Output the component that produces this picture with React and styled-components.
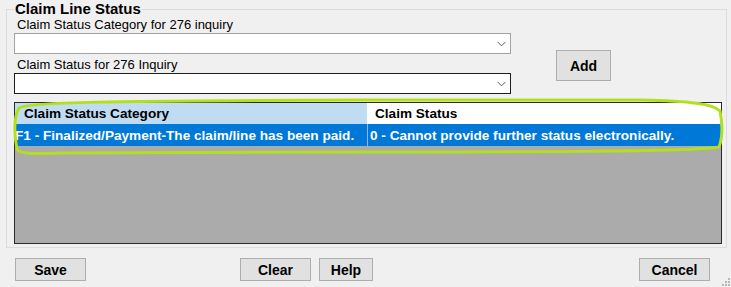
import React from "react";
import styled, { createGlobalStyle } from "styled-components";

const GlobalStyle = createGlobalStyle`
  body {
    margin: 0;
    background: #f0f0f0;
    font-family: "Liberation Sans", Arial, sans-serif;
    font-size: 13px;
    color: #000;
  }
`;

const Page = styled.div`
  width: 731px;
  height: 287px;
  box-sizing: border-box;
  padding: 0 4px 0 6px;
  background: #f0f0f0;
  position: relative;
  overflow: hidden;
`;

const Group = styled.fieldset`
  margin: 1px 0 0 0;
  padding: 0 4px 3px 7px;
  border: 1px solid #dcdcdc;
  min-inline-size: 0;
`;

const Legend = styled.legend`
  padding: 0 1px;
  font-weight: bold;
  font-size: 15px;
  line-height: 16px;
`;

const TopRow = styled.div`
  display: flex;
  align-items: flex-start;
`;

const Fields = styled.div`
  display: flex;
  flex-direction: column;
  width: 497px;
`;

const Label = styled.div`
  line-height: 16px;
  height: 16px;
  padding-left: 3px;
  margin-top: ${(p) => p.$top || 0}px;
`;

const Combo = styled.div`
  height: 21px;
  box-sizing: border-box;
  background: #fff;
  border: 1px solid ${(p) => (p.$focused ? "#1e1e1e" : "#a3a3a3")};
  display: flex;
  align-items: center;
  justify-content: flex-end;
  padding-right: 4px;
`;

const Button = styled.button`
  box-sizing: border-box;
  width: ${(p) => p.$w}px;
  height: ${(p) => p.$h || 23}px;
  margin-left: ${(p) => p.$ml || 0}px;
  margin-top: ${(p) => p.$mt || 0}px;
  background: #e1e1e1;
  border: 1px solid #adadad;
  font-family: "Liberation Sans", Arial, sans-serif;
  font-weight: bold;
  font-size: 14px;
  color: #000;
  padding: 0;
  cursor: pointer;
`;

const Grid = styled.div`
  position: relative;
  margin-top: 8px;
  height: 142px;
  box-sizing: border-box;
  border: 1px solid #2b2b2b;
  background: #ababab;
  display: flex;
  flex-direction: column;
`;

const Row = styled.div`
  display: flex;
  height: ${(p) => p.$h}px;
  font-weight: bold;
  font-size: 13.6px;
`;

const Cell = styled.div`
  box-sizing: border-box;
  width: ${(p) => (p.$wide ? "auto" : "352px")};
  flex: ${(p) => (p.$wide ? 1 : "none")};
  display: flex;
  align-items: center;
  padding-left: ${(p) => p.$pad}px;
  background: ${(p) => p.$bg};
  color: ${(p) => p.$color || "#000"};
  border-left: ${(p) => (p.$sep ? `1px solid ${p.$sep}` : "none")};
  white-space: nowrap;
  overflow: hidden;
`;

const Marker = styled.svg`
  position: absolute;
  left: -14px;
  top: -102px;
  width: 731px;
  height: 287px;
  pointer-events: none;
  overflow: visible;
`;

const Footer = styled.div`
  display: flex;
  align-items: flex-start;
  margin-top: 10px;
  padding-left: 9px;
`;

const Grip = styled.svg`
  position: absolute;
  right: 1px;
  bottom: 1px;
`;

const Chevron = () => (
  <svg width="9" height="6" viewBox="0 0 9 6">
    <polyline points="0.5,0.8 4.5,4.8 8.5,0.8" fill="none" stroke="#5f5f5f" strokeWidth="1" />
  </svg>
);

export default function App() {
  return (
    <Page>
      <GlobalStyle />
      <Group>
        <Legend>Claim Line Status</Legend>
        <TopRow>
          <Fields>
            <Label>Claim Status Category for 276 inquiry</Label>
            <Combo><Chevron /></Combo>
            <Label $top={3}>Claim Status for 276 Inquiry</Label>
            <Combo $focused><Chevron /></Combo>
          </Fields>
          <Button $w={55} $h={31} $ml={45} $mt={33}>Add</Button>
        </TopRow>
        <Grid>
          <Row $h={21}>
            <Cell $bg="#bfdcf3" $pad={9}>Claim Status Category</Cell>
            <Cell $wide $bg="#ffffff" $pad={8}>Claim Status</Cell>
          </Row>
          <Row $h={22}>
            <Cell $bg="#0078d7" $color="#fff" $pad={0}>F1 - Finalized/Payment-The claim/line has been paid.</Cell>
            <Cell $wide $bg="#0078d7" $color="#fff" $pad={2} $sep="#8fbbe6">0 - Cannot provide further status electronically.</Cell>
          </Row>
          <Marker>
            <path
              d="M16,148 C13,132 13,116 18,107 C28,101 100,100 360,99 L640,99 C690,100 712,103 719,110 C722,125 721,138 718,146 C690,151 500,151 360,151 L60,152 C30,153 18,153 16,148 Z"
              fill="none"
              stroke="#b2e01e"
              strokeWidth="3"
            />
          </Marker>
        </Grid>
      </Group>
      <Footer>
        <Button $w={71}>Save</Button>
        <Button $w={71} $ml={154}>Clear</Button>
        <Button $w={54} $ml={8}>Help</Button>
        <Button $w={71} $ml={266}>Cancel</Button>
      </Footer>
      <Grip width="9" height="9" viewBox="0 0 9 9">
        {[[7, 1], [7, 4], [4, 4], [7, 7], [4, 7], [1, 7]].map(([x, y]) => (
          <rect key={`${x}-${y}`} x={x} y={y} width="2" height="2" fill="#b8b8b8" />
        ))}
      </Grip>
    </Page>
  );
}
